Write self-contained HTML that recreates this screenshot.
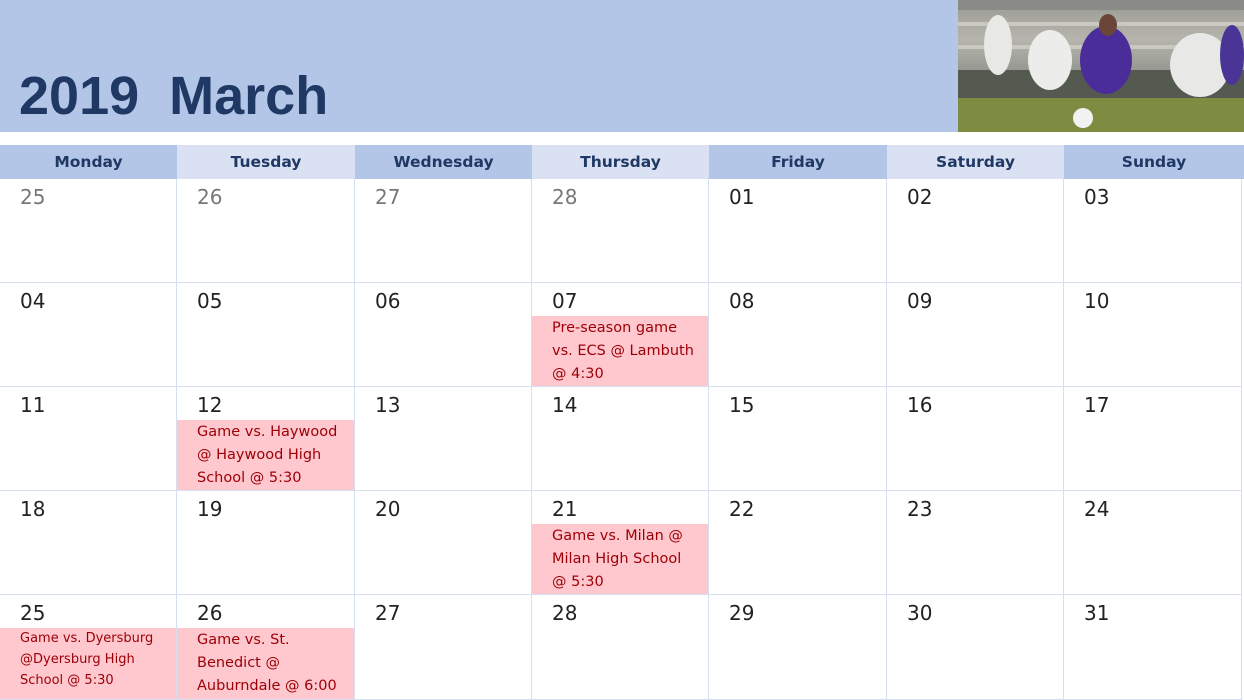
<!DOCTYPE html>
<html><head><style>
body{margin:0;width:1244px;height:700px;overflow:hidden;background:#fff;font-family:"DejaVu Sans",Verdana,sans-serif;position:relative}
.top{position:absolute;left:0;top:0;width:1244px;height:132px;background:#b4c6e7}
.title{position:absolute;left:19px;top:64px;font-family:"Liberation Sans",Arial,sans-serif;font-weight:bold;font-size:54px;color:#1f3864;line-height:64px;white-space:pre}
.photo{position:absolute;left:958px;top:0;width:286px;height:132px;overflow:hidden;background:linear-gradient(#9a9a94 0%,#b5b5ad 30%,#8e8f88 60%,#6f7a45 72%,#7b8a42 100%)}
.hd{position:absolute;top:145px;height:34px;line-height:34px;text-align:center;font-size:15.5px;font-weight:bold;color:#1f3864}
.cell{position:absolute;border-right:1px solid #d6dff0;border-bottom:1px solid #d6dff0;box-sizing:border-box}
.n{position:absolute;left:20px;top:6px;font-size:20px;color:#222}
.g{color:#777}
.ev{position:absolute;left:0;right:0;bottom:0;background:#ffc7ce;color:#9c0006;font-size:14.5px;line-height:23px;padding-left:20px;padding-top:1px;box-sizing:border-box}
</style></head><body>
<div class="top"></div>
<div class="title">2019  March</div>
<div class="photo">
<svg width="286" height="132" viewBox="0 0 286 132">
<rect x="0" y="0" width="286" height="10" fill="#8a8a86"/>
<rect x="0" y="22" width="286" height="4" fill="#c9c9c2"/>
<rect x="0" y="45" width="286" height="4" fill="#c9c9c2"/>
<rect x="0" y="70" width="286" height="28" fill="#555a50"/>
<rect x="0" y="98" width="286" height="34" fill="#7d8c40"/>
<ellipse cx="40" cy="45" rx="14" ry="30" fill="#e8e8e4"/>
<ellipse cx="92" cy="60" rx="22" ry="30" fill="#ececea"/>
<ellipse cx="148" cy="60" rx="26" ry="34" fill="#4b2d9a"/>
<ellipse cx="150" cy="25" rx="9" ry="11" fill="#6a4638"/>
<ellipse cx="242" cy="65" rx="30" ry="32" fill="#e8e8e6"/>
<ellipse cx="274" cy="55" rx="12" ry="30" fill="#4a3597"/>
<circle cx="125" cy="118" r="10" fill="#f2f2f2"/>
</svg>
</div>
<div class="hd" style="left:0;width:177px;background:#b4c6e7">Monday</div>
<div class="hd" style="left:177px;width:178px;background:#dae1f3">Tuesday</div>
<div class="hd" style="left:355px;width:177px;background:#b4c6e7">Wednesday</div>
<div class="hd" style="left:532px;width:177px;background:#dae1f3">Thursday</div>
<div class="hd" style="left:709px;width:178px;background:#b4c6e7">Friday</div>
<div class="hd" style="left:887px;width:177px;background:#dae1f3">Saturday</div>
<div class="hd" style="left:1064px;width:180px;background:#b4c6e7">Sunday</div>

<div class="cell" style="left:0;top:179px;width:177px;height:104px"><div class="n g">25</div></div>
<div class="cell" style="left:177px;top:179px;width:178px;height:104px"><div class="n g">26</div></div>
<div class="cell" style="left:355px;top:179px;width:177px;height:104px"><div class="n g">27</div></div>
<div class="cell" style="left:532px;top:179px;width:177px;height:104px"><div class="n g">28</div></div>
<div class="cell" style="left:709px;top:179px;width:178px;height:104px"><div class="n">01</div></div>
<div class="cell" style="left:887px;top:179px;width:177px;height:104px"><div class="n">02</div></div>
<div class="cell" style="left:1064px;top:179px;width:178px;height:104px"><div class="n">03</div></div>

<div class="cell" style="left:0;top:283px;width:177px;height:104px"><div class="n">04</div></div>
<div class="cell" style="left:177px;top:283px;width:178px;height:104px"><div class="n">05</div></div>
<div class="cell" style="left:355px;top:283px;width:177px;height:104px"><div class="n">06</div></div>
<div class="cell" style="left:532px;top:283px;width:177px;height:104px"><div class="n">07</div><div class="ev" style="height:70px">Pre-season game<br>vs. ECS @ Lambuth<br>@ 4:30</div></div>
<div class="cell" style="left:709px;top:283px;width:178px;height:104px"><div class="n">08</div></div>
<div class="cell" style="left:887px;top:283px;width:177px;height:104px"><div class="n">09</div></div>
<div class="cell" style="left:1064px;top:283px;width:178px;height:104px"><div class="n">10</div></div>

<div class="cell" style="left:0;top:387px;width:177px;height:104px"><div class="n">11</div></div>
<div class="cell" style="left:177px;top:387px;width:178px;height:104px"><div class="n">12</div><div class="ev" style="height:70px">Game vs. Haywood<br>@ Haywood High<br>School @ 5:30</div></div>
<div class="cell" style="left:355px;top:387px;width:177px;height:104px"><div class="n">13</div></div>
<div class="cell" style="left:532px;top:387px;width:177px;height:104px"><div class="n">14</div></div>
<div class="cell" style="left:709px;top:387px;width:178px;height:104px"><div class="n">15</div></div>
<div class="cell" style="left:887px;top:387px;width:177px;height:104px"><div class="n">16</div></div>
<div class="cell" style="left:1064px;top:387px;width:178px;height:104px"><div class="n">17</div></div>

<div class="cell" style="left:0;top:491px;width:177px;height:104px"><div class="n">18</div></div>
<div class="cell" style="left:177px;top:491px;width:178px;height:104px"><div class="n">19</div></div>
<div class="cell" style="left:355px;top:491px;width:177px;height:104px"><div class="n">20</div></div>
<div class="cell" style="left:532px;top:491px;width:177px;height:104px"><div class="n">21</div><div class="ev" style="height:70px">Game vs. Milan @<br>Milan High School<br>@ 5:30</div></div>
<div class="cell" style="left:709px;top:491px;width:178px;height:104px"><div class="n">22</div></div>
<div class="cell" style="left:887px;top:491px;width:177px;height:104px"><div class="n">23</div></div>
<div class="cell" style="left:1064px;top:491px;width:178px;height:104px"><div class="n">24</div></div>

<div class="cell" style="left:0;top:595px;width:177px;height:105px"><div class="n">25</div><div class="ev" style="height:71px;font-size:13px;line-height:21px;padding-top:0">Game vs. Dyersburg<br>@Dyersburg High<br>School @ 5:30</div></div>
<div class="cell" style="left:177px;top:595px;width:178px;height:105px"><div class="n">26</div><div class="ev" style="height:71px">Game vs. St.<br>Benedict @<br>Auburndale @ 6:00</div></div>
<div class="cell" style="left:355px;top:595px;width:177px;height:105px"><div class="n">27</div></div>
<div class="cell" style="left:532px;top:595px;width:177px;height:105px"><div class="n">28</div></div>
<div class="cell" style="left:709px;top:595px;width:178px;height:105px"><div class="n">29</div></div>
<div class="cell" style="left:887px;top:595px;width:177px;height:105px"><div class="n">30</div></div>
<div class="cell" style="left:1064px;top:595px;width:178px;height:105px"><div class="n">31</div></div>
</body></html>
